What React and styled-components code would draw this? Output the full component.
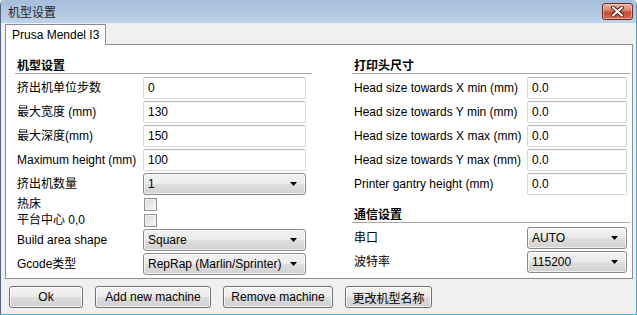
import React from "react";
import styled, { createGlobalStyle } from "styled-components";

const GlobalStyle = createGlobalStyle`
  html, body {
    margin: 0;
    padding: 0;
  }
  body {
    font-family: "Liberation Sans", "Noto Sans CJK SC", sans-serif;
    font-size: 12px;
    color: #000;
    background: #f0f0f0;
  }
`;

const Window = styled.div`
  width: 637px;
  height: 315px;
  box-sizing: border-box;
  background: #f0f0f0;
  border-left: 1px solid #56677d;
  border-right: 1px solid #3ea6d8;
  border-bottom: 1px solid #45b2e4;
  border-radius: 5px 5px 0 0;
  overflow: hidden;
  display: flex;
  flex-direction: column;
`;

const TitleBar = styled.div`
  height: 23px;
  flex: none;
  display: flex;
  align-items: center;
  justify-content: space-between;
  padding: 0 3px 0 7px;
  background: linear-gradient(#a5bedb, #bdd2ea);
  font-family: "Noto Sans CJK SC", sans-serif;
  font-size: 12px;
  color: #1e1e1e;
`;

const CloseButton = styled.div`
  width: 31px;
  height: 17px;
  box-sizing: border-box;
  border: 1px solid #6f2b22;
  border-radius: 3px;
  background: linear-gradient(#eab0a2 0%, #dc8a74 40%, #c54a30 55%, #d27058 100%);
  box-shadow: inset 0 0 0 1px rgba(255, 220, 210, 0.5);
  display: flex;
  align-items: center;
  justify-content: center;
`;

const TabStrip = styled.div`
  display: flex;
  padding-left: 4px;
  margin-top: 1px;
  flex: none;
`;

const Tab = styled.div`
  position: relative;
  z-index: 1;
  height: 21px;
  box-sizing: border-box;
  padding: 0 6px;
  line-height: 20px;
  background: #fff;
  border: 1px solid #898c95;
  border-bottom: none;
  margin-bottom: -1px;
`;

const Panel = styled.div`
  margin: 0 3px 0 4px;
  border: 1px solid #898c95;
  background: #fff;
  padding: 11px 0 3px 9px;
  display: grid;
  grid-template-columns: 296px 278px;
  column-gap: 41px;
`;

const Column = styled.div`
  display: flex;
  flex-direction: column;
`;

const SectionHeader = styled.div`
  height: 17px;
  line-height: 17px;
  padding-left: 2px;
  margin-top: ${(p) => p.$top || 0}px;
  border-bottom: 1px solid #a6a6a6;
  font-family: "Noto Sans CJK SC", sans-serif;
  font-weight: bold;
`;

const Rows = styled.div`
  display: grid;
  grid-template-columns: ${(p) => p.$cols};
  row-gap: 2px;
  margin-top: ${(p) => p.$top || 3}px;
  align-items: center;
`;

const Label = styled.div`
  padding-left: 2px;
  line-height: 14px;
  white-space: nowrap;
`;

const TextField = styled.input`
  height: 22px;
  width: 100%;
  box-sizing: border-box;
  margin: 0;
  padding: 0 4px;
  border: 1px solid #d5d8dd;
  border-top-color: #b3b6bd;
  border-radius: 2px;
  background: #fff;
  font: inherit;
  color: #000;
  outline: none;
`;

const Combo = styled.div`
  height: 22px;
  box-sizing: border-box;
  padding: 0 8px 0 4px;
  display: flex;
  align-items: center;
  justify-content: space-between;
  border: 1px solid #8a8a8a;
  border-radius: 3px;
  background: linear-gradient(#f3f3f3 0%, #ebebeb 50%, #dedede 50%, #d1d1d1 100%);
  box-shadow: inset 0 0 0 1px rgba(255, 255, 255, 0.7);
  white-space: nowrap;
`;

const CheckBox = styled.div`
  width: 13px;
  height: 13px;
  box-sizing: border-box;
  border: 1px solid #8e8f8f;
  background: linear-gradient(135deg, #d9d9d9, #f7f7f7);
  box-shadow: inset 0 0 0 1px #f2f2f2;
  margin-left: 1px;
`;

const Footer = styled.div`
  display: flex;
  gap: 12px;
  padding: 7px 0 0 8px;
`;

const Button = styled.div`
  width: ${(p) => p.$w}px;
  height: 22px;
  box-sizing: border-box;
  border: 1px solid #707070;
  border-radius: 3px;
  background: linear-gradient(#f2f2f2 0%, #ebebeb 50%, #dddddd 50%, #cfcfcf 100%);
  box-shadow: inset 0 0 0 1px rgba(255, 255, 255, 0.8);
  display: flex;
  align-items: center;
  justify-content: center;
  white-space: nowrap;
`;

const Arrow = () => (
  <svg width="7" height="4" viewBox="0 0 7 4">
    <polygon points="0,0 7,0 3.5,4" fill="#000" />
  </svg>
);

const Select = ({ value }) => (
  <Combo>
    <span>{value}</span>
    <Arrow />
  </Combo>
);

const leftFields = [
  ["挤出机单位步数", "0"],
  ["最大宽度 (mm)", "130"],
  ["最大深度(mm)", "150"],
  ["Maximum height (mm)", "100"],
];

const headFields = [
  ["Head size towards X min (mm)", "0.0"],
  ["Head size towards Y min (mm)", "0.0"],
  ["Head size towards X max (mm)", "0.0"],
  ["Head size towards Y max (mm)", "0.0"],
  ["Printer gantry height (mm)", "0.0"],
];

export default function App() {
  return (
    <>
      <GlobalStyle />
      <Window>
        <TitleBar>
          <span>机型设置</span>
          <CloseButton>
            <svg width="13" height="11" viewBox="0 0 13 11">
              <path
                d="M2 1.5 L11 9.5 M11 1.5 L2 9.5"
                stroke="#4a1a14"
                strokeWidth="4"
                strokeLinecap="round"
              />
              <path
                d="M2 1.5 L11 9.5 M11 1.5 L2 9.5"
                stroke="#fff"
                strokeWidth="2.2"
                strokeLinecap="round"
              />
            </svg>
          </CloseButton>
        </TitleBar>
        <TabStrip>
          <Tab>Prusa Mendel I3</Tab>
        </TabStrip>
        <Panel>
          <Column>
            <SectionHeader>机型设置</SectionHeader>
            <Rows $cols="128px 163px">
              {leftFields.map(([label, value]) => (
                <React.Fragment key={label}>
                  <Label>{label}</Label>
                  <TextField readOnly defaultValue={value} />
                </React.Fragment>
              ))}
              <Label>挤出机数量</Label>
              <Select value="1" />
              <Label>热床</Label>
              <CheckBox />
              <Label>平台中心 0,0</Label>
              <CheckBox />
              <Label>Build area shape</Label>
              <Select value="Square" />
              <Label>Gcode类型</Label>
              <Select value="RepRap (Marlin/Sprinter)" />
            </Rows>
          </Column>
          <Column>
            <SectionHeader>打印头尺寸</SectionHeader>
            <Rows $cols="175px 100px">
              {headFields.map(([label, value]) => (
                <React.Fragment key={label}>
                  <Label>{label}</Label>
                  <TextField readOnly defaultValue={value} />
                </React.Fragment>
              ))}
            </Rows>
            <SectionHeader $top={10}>通信设置</SectionHeader>
            <Rows $cols="175px 100px" $top={4}>
              <Label>串口</Label>
              <Select value="AUTO" />
              <Label>波特率</Label>
              <Select value="115200" />
            </Rows>
          </Column>
        </Panel>
        <Footer>
          <Button $w={74}>Ok</Button>
          <Button $w={116}>Add new machine</Button>
          <Button $w={110}>Remove machine</Button>
          <Button $w={87}>更改机型名称</Button>
        </Footer>
      </Window>
    </>
  );
}
